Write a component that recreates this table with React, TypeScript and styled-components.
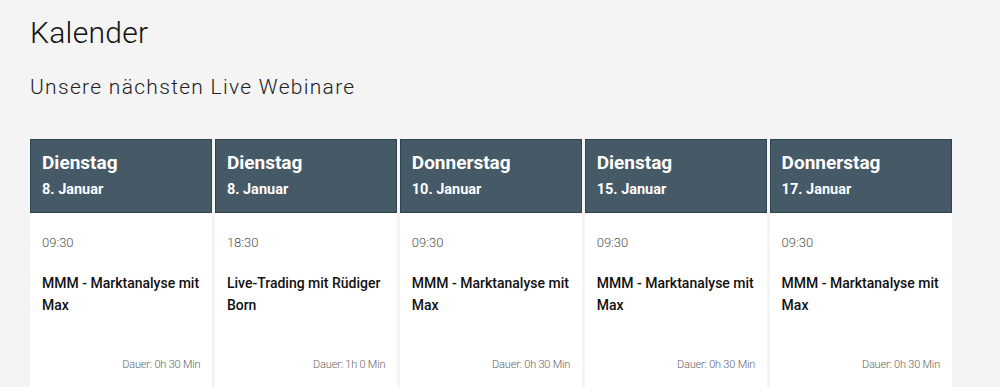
import styled, { createGlobalStyle } from 'styled-components';

interface Webinar {
  day: string;
  date: string;
  time: string;
  title: string;
  duration: string;
}

const webinars: Webinar[] = [
  { day: 'Dienstag', date: '8. Januar', time: '09:30', title: 'MMM - Marktanalyse mit Max', duration: 'Dauer: 0h 30 Min' },
  { day: 'Dienstag', date: '8. Januar', time: '18:30', title: 'Live-Trading mit Rüdiger Born', duration: 'Dauer: 1h 0 Min' },
  { day: 'Donnerstag', date: '10. Januar', time: '09:30', title: 'MMM - Marktanalyse mit Max', duration: 'Dauer: 0h 30 Min' },
  { day: 'Dienstag', date: '15. Januar', time: '09:30', title: 'MMM - Marktanalyse mit Max', duration: 'Dauer: 0h 30 Min' },
  { day: 'Donnerstag', date: '17. Januar', time: '09:30', title: 'MMM - Marktanalyse mit Max', duration: 'Dauer: 0h 30 Min' },
];

const GlobalStyle = createGlobalStyle`
  html, body {
    margin: 0;
    padding: 0;
    background: #f4f4f4;
    overflow: hidden;
  }
  body {
    font-family: Roboto, "Liberation Sans", sans-serif;
    color: #1a1a1a;
  }
`;

const Page = styled.div`
  padding: 15px 48px 0 30px;
`;

const Title = styled.h1`
  margin: 0;
  font-size: 30px;
  font-weight: 300;
  line-height: 36px;
  letter-spacing: 0.3px;
  color: #111;
`;

const Subtitle = styled.h2`
  margin: 22px 0 0;
  font-size: 21px;
  font-weight: 300;
  line-height: 28px;
  letter-spacing: 1.3px;
  color: #222;
`;

const Grid = styled.div`
  display: grid;
  grid-template-columns: repeat(5, 1fr);
  gap: 2.5px;
  width: 922px;
  margin-top: 38px;
`;

const Card = styled.div`
  display: flex;
  flex-direction: column;
  background: #fff;
  height: 260px;
`;

const CardHeader = styled.div`
  background: #455966;
  border: 1px solid #2f4451;
  padding: 12px 11px 0;
  height: 74px;
  box-sizing: border-box;
  color: #fff;
`;

const Day = styled.div`
  font-size: 19px;
  font-weight: 700;
  line-height: 22px;
`;

const DateLabel = styled.div`
  margin-top: 7px;
  font-size: 14.5px;
  font-weight: 700;
  line-height: 18px;
`;

const CardBody = styled.div`
  display: flex;
  flex-direction: column;
  box-sizing: border-box;
  padding: 21px 12px 0 12px;
  height: 159px;
`;

const Time = styled.div`
  font-size: 13px;
  font-weight: 300;
  color: #555;
  line-height: 18px;
`;

const EventTitle = styled.div`
  margin-top: 20px;
  margin-right: -2px;
  font-size: 14px;
  font-weight: 500;
  line-height: 22px;
  color: #111;
`;

const Duration = styled.div`
  margin-top: auto;
  text-align: right;
  font-size: 11px;
  font-weight: 300;
  letter-spacing: -0.2px;
  color: #666;
  line-height: 14px;
`;

const App = () => (
  <>
    <GlobalStyle />
    <Page>
      <Title>Kalender</Title>
      <Subtitle>Unsere nächsten Live Webinare</Subtitle>
      <Grid>
        {webinars.map((w, i) => (
          <Card key={i}>
            <CardHeader>
              <Day>{w.day}</Day>
              <DateLabel>{w.date}</DateLabel>
            </CardHeader>
            <CardBody>
              <Time>{w.time}</Time>
              <EventTitle>{w.title}</EventTitle>
              <Duration>{w.duration}</Duration>
            </CardBody>
          </Card>
        ))}
      </Grid>
    </Page>
  </>
);

export default App;
